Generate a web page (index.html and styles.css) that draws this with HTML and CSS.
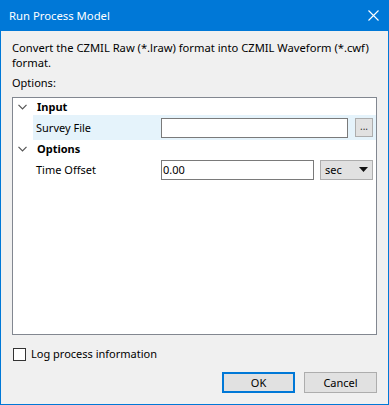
FILE: index.html
```html
<!DOCTYPE html>
<html lang="en">
<head>
  <meta charset="UTF-8">
  <title>Run Process Model</title>
  <link rel="stylesheet" href="styles.css">
</head>
<body>

<div class="dialog">
  <div class="titlebar">
    <span class="title">Run Process Model</span>
    <svg class="close" width="11" height="11" viewBox="0 0 11 11">
      <path d="M0.5 0.5 L10.5 10.5 M10.5 0.5 L0.5 10.5" stroke="#fff" stroke-width="1.1" fill="none"/>
    </svg>
  </div>

  <div class="content">
    <p class="desc">Convert the CZMIL Raw (*.lraw) format into CZMIL Waveform (*.cwf)<br>format.</p>
    <div class="label">Options:</div>

    <!-- Property tree -->
    <div class="tree">
      <div class="group">
        <svg class="chevron" width="9" height="6" viewBox="0 0 9 6"><path d="M0.5 0.8 L4.5 4.8 L8.5 0.8" stroke="#555" stroke-width="1.2" fill="none"/></svg>
        <span>Input</span>
      </div>
      <div class="row selected">
        <span class="name">Survey File</span>
        <div class="editor">
          <div class="field wide"></div>
          <div class="browse">...</div>
        </div>
      </div>
      <div class="group">
        <svg class="chevron" width="9" height="6" viewBox="0 0 9 6"><path d="M0.5 0.8 L4.5 4.8 L8.5 0.8" stroke="#555" stroke-width="1.2" fill="none"/></svg>
        <span>Options</span>
      </div>
      <div class="row">
        <span class="name">Time Offset</span>
        <div class="editor">
          <div class="field">0.00</div>
          <div class="combo">
            <span>sec</span>
            <svg width="9" height="5" viewBox="0 0 9 5"><path d="M0 0 H9 L4.5 5 Z" fill="#111"/></svg>
          </div>
        </div>
      </div>
    </div>

    <div class="check">
      <span class="box"></span>
      <span>Log process information</span>
    </div>

    <div class="buttons">
      <div class="btn default">OK</div>
      <div class="btn">Cancel</div>
    </div>
  </div>
</div>

</body>
</html>
```

FILE: styles.css
```css
body {
  margin: 0;
  padding: 0;
  font-family: "Noto Sans", "Open Sans", sans-serif;
  font-size: 11px;
  color: #000;
}

.dialog {
  width: 389px;
  height: 405px;
  box-sizing: border-box;
  border: 1px solid #0078d7;
  border-top: none;
  background-color: #f0f0f0;
  display: flex;
  flex-direction: column;
}

.titlebar {
  height: 31px;
  margin: 0 -1px;
  background-color: #0078d7;
  color: #fff;
  display: flex;
  align-items: center;
  justify-content: space-between;
  padding: 0 10px 0 9px;
  flex-shrink: 0;
}

.title {
  font-size: 11.3px;
  line-height: 16px;
}

.content {
  flex: 1;
  display: flex;
  flex-direction: column;
  padding: 9px 11px 11px 11px;
}

.desc {
  margin: 0;
  font-size: 11.2px;
  line-height: 15px;
  white-space: nowrap;
}

.label {
  margin-top: 5px;
  line-height: 15px;
}

.tree {
  margin-top: 7px;
  height: 236px;
  border: 1px solid #828790;
  background-color: #fff;
  display: flex;
  flex-direction: column;
}

.group {
  height: 17px;
  display: flex;
  align-items: center;
  font-weight: bold;
}

.chevron {
  margin: 0 10px 0 5px;
}

.row {
  height: 25px;
  display: flex;
  align-items: center;
  margin-left: 20px;
  padding-right: 3px;
}

.row.selected {
  background-color: #e5f3fb;
}

.name {
  width: 125px;
  padding-left: 3px;
}

.editor {
  flex: 1;
  display: flex;
  align-items: center;
  justify-content: space-between;
}

.field {
  width: 150px;
  height: 18px;
  border: 1px solid #7a7a7a;
  background-color: #fff;
  line-height: 18px;
  padding-left: 1px;
}

.field.wide {
  width: 184px;
}

.browse {
  width: 16px;
  height: 17px;
  border: 1px solid #adadad;
  background-color: #e1e1e1;
  line-height: 14px;
  text-align: center;
  font-size: 10px;
  color: #333;
}

.combo {
  width: 43px;
  height: 18px;
  border: 1px solid #adadad;
  background-color: #e1e1e1;
  display: flex;
  align-items: center;
  justify-content: space-between;
  padding: 0 4px;
}

.check {
  margin-top: 11px;
  display: flex;
  align-items: center;
  line-height: 16px;
}

.box {
  width: 11px;
  height: 11px;
  border: 1px solid #333;
  background-color: #fff;
  margin: 0 5px 0 1px;
}

.buttons {
  margin-top: auto;
  display: flex;
  justify-content: flex-end;
  gap: 9px;
}

.btn {
  width: 71px;
  height: 19px;
  border: 1px solid #adadad;
  background-color: #e1e1e1;
  text-align: center;
  line-height: 19px;
}

.btn.default {
  width: 69px;
  height: 17px;
  border: 2px solid #0078d7;
  line-height: 17px;
}
```
